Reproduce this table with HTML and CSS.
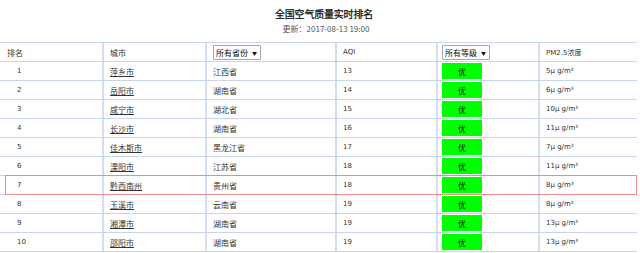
FILE: index.html
```html
<!DOCTYPE html>
<html lang="zh">
<head>
<meta charset="utf-8">
<title>全国空气质量实时排名</title>
<link rel="stylesheet" href="styles.css">
</head>
<body>
<div class="page">
  <h1 class="title">全国空气质量实时排名</h1>
  <p class="updated">更新：2017-08-13 19:00</p>
  <div class="table">
    <div class="row head">
      <div class="cell c-rank">排名</div>
      <div class="cell c-city">城市</div>
      <div class="cell c-prov"><span class="sel">所有省份<span class="arr">▼</span></span></div>
      <div class="cell c-aqi">AQI</div>
      <div class="cell c-lvl"><span class="sel">所有等级<span class="arr">▼</span></span></div>
      <div class="cell c-pm">PM2.5浓度</div>
    </div>
    <div class="row"><div class="cell c-rank num">1</div><div class="cell c-city"><a>萍乡市</a></div><div class="cell c-prov">江西省</div><div class="cell c-aqi">13</div><div class="cell c-lvl"><span class="badge">优</span></div><div class="cell c-pm">5μ g/m³</div></div>
    <div class="row"><div class="cell c-rank num">2</div><div class="cell c-city"><a>岳阳市</a></div><div class="cell c-prov">湖南省</div><div class="cell c-aqi">14</div><div class="cell c-lvl"><span class="badge">优</span></div><div class="cell c-pm">6μ g/m³</div></div>
    <div class="row"><div class="cell c-rank num">3</div><div class="cell c-city"><a>咸宁市</a></div><div class="cell c-prov">湖北省</div><div class="cell c-aqi">15</div><div class="cell c-lvl"><span class="badge">优</span></div><div class="cell c-pm">10μ g/m³</div></div>
    <div class="row"><div class="cell c-rank num">4</div><div class="cell c-city"><a>长沙市</a></div><div class="cell c-prov">湖南省</div><div class="cell c-aqi">16</div><div class="cell c-lvl"><span class="badge">优</span></div><div class="cell c-pm">11μ g/m³</div></div>
    <div class="row"><div class="cell c-rank num">5</div><div class="cell c-city"><a>佳木斯市</a></div><div class="cell c-prov">黑龙江省</div><div class="cell c-aqi">17</div><div class="cell c-lvl"><span class="badge">优</span></div><div class="cell c-pm">7μ g/m³</div></div>
    <div class="row"><div class="cell c-rank num">6</div><div class="cell c-city"><a>溧阳市</a></div><div class="cell c-prov">江苏省</div><div class="cell c-aqi">18</div><div class="cell c-lvl"><span class="badge">优</span></div><div class="cell c-pm">11μ g/m³</div></div>
    <div class="row hl"><div class="cell c-rank num">7</div><div class="cell c-city"><a>黔西南州</a></div><div class="cell c-prov">贵州省</div><div class="cell c-aqi">18</div><div class="cell c-lvl"><span class="badge">优</span></div><div class="cell c-pm">8μ g/m³</div></div>
    <div class="row"><div class="cell c-rank num">8</div><div class="cell c-city"><a>玉溪市</a></div><div class="cell c-prov">云南省</div><div class="cell c-aqi">19</div><div class="cell c-lvl"><span class="badge">优</span></div><div class="cell c-pm">8μ g/m³</div></div>
    <div class="row"><div class="cell c-rank num">9</div><div class="cell c-city"><a>湘潭市</a></div><div class="cell c-prov">湖南省</div><div class="cell c-aqi">19</div><div class="cell c-lvl"><span class="badge">优</span></div><div class="cell c-pm">13μ g/m³</div></div>
    <div class="row"><div class="cell c-rank num">10</div><div class="cell c-city"><a>邵阳市</a></div><div class="cell c-prov">湖南省</div><div class="cell c-aqi">19</div><div class="cell c-lvl"><span class="badge">优</span></div><div class="cell c-pm">13μ g/m³</div></div>
  </div>
</div>
</body>
</html>
```

FILE: styles.css
```css
html, body {
  margin: 0;
  padding: 0;
  background: #fff;
}
body {
  font-family: "Noto Sans CJK SC", "DejaVu Sans", sans-serif;
  font-size: 8px;
  color: #333;
  width: 640px;
  height: 253px;
  overflow: hidden;
}
.page {
  display: flex;
  flex-direction: column;
  align-items: center;
  padding-top: 7px;
}
.title {
  margin: 0;
  font-size: 10px;
  line-height: 14px;
  font-weight: normal;
  color: #111;
  -webkit-text-stroke: 0.25px #111;
  letter-spacing: -0.2px;
  padding-left: 8px;
}
.updated {
  margin: 2px 0 0 0;
  font-size: 8px;
  line-height: 12px;
  color: #555;
  padding-left: 12px;
}
.table {
  margin-top: 7px;
  align-self: flex-start;
  width: 637px;
  border-top: 1px solid #c8d5ed;
}
.row {
  display: grid;
  grid-template-columns: 102px 103px 130px 101px 102px 99px;
  height: 19px;
  border-bottom: 1px solid #c8d5ed;
  box-sizing: border-box;
  position: relative;
}
.cell {
  display: flex;
  align-items: center;
  padding-left: 6px;
  border-left: 2px solid #d3ddf0;
  white-space: nowrap;
  overflow: hidden;
}
.cell.c-rank {
  border-left: none;
  padding-left: 7px;
}
.cell.num {
  padding-left: 17px;
  font-family: "DejaVu Sans", sans-serif;
  font-size: 7px;
}
.c-aqi, .c-pm {
  font-family: "DejaVu Sans", "Noto Sans CJK SC", sans-serif;
  font-size: 7px;
}
.c-lvl {
  padding-left: 4px;
}
.c-city a {
  color: #333;
  text-decoration: underline;
}
.sel {
  display: inline-flex;
  align-items: center;
  height: 13px;
  padding: 0 3px 0 2px;
  border: 1px solid #a8a8a8;
  border-radius: 1px;
  background: #fff;
  color: #111;
  font-size: 8px;
}
.arr {
  font-size: 5px;
  margin-left: 4px;
}
.badge {
  display: flex;
  align-items: center;
  justify-content: center;
  width: 40px;
  height: 16px;
  background: #00ff00;
  color: #111;
  font-size: 8px;
}
.row.hl::after {
  content: "";
  position: absolute;
  left: 5px;
  right: 0;
  top: -1px;
  bottom: -1px;
  border: 1px solid #f08a8a;
  pointer-events: none;
}
```
